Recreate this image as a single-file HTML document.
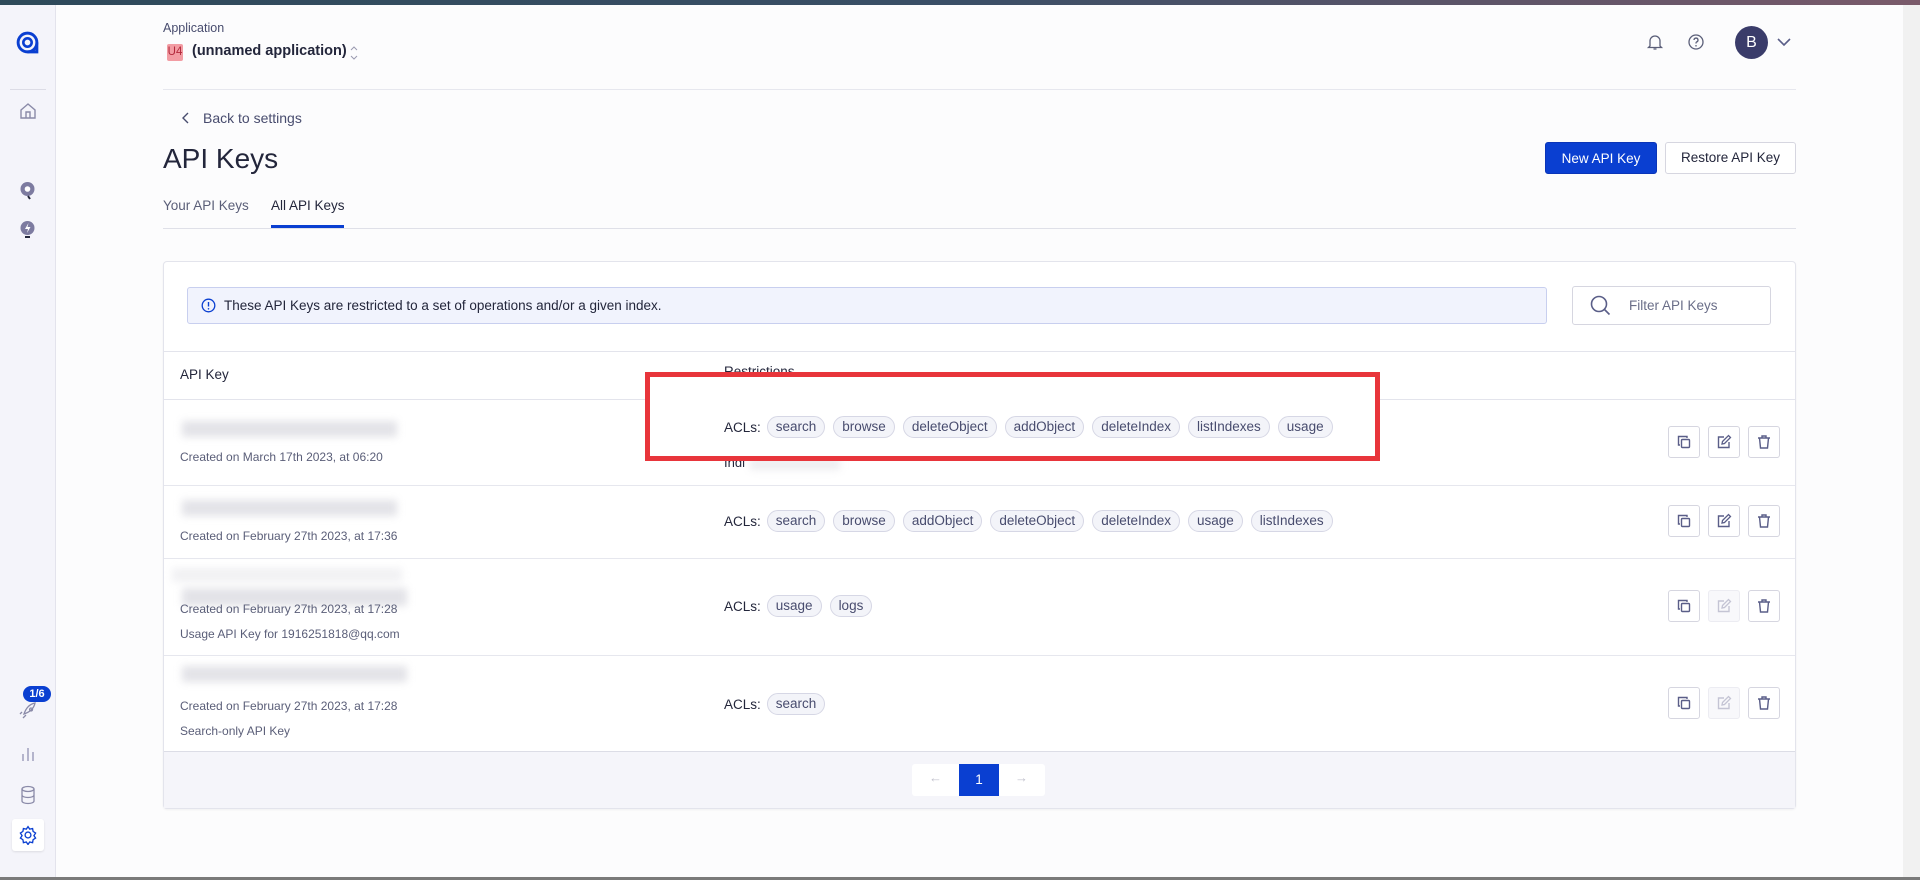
<!DOCTYPE html>
<html><head><meta charset="utf-8">
<style>
*{box-sizing:border-box;margin:0;padding:0}
body{width:1920px;height:880px;overflow:hidden;background:#fcfcfd;font-family:"Liberation Sans",sans-serif;color:#23263b;position:relative}
.abs{position:absolute}
.topbar{left:0;top:0;width:1920px;height:5px;background:linear-gradient(90deg,#2e4a5a,#3a4e66 50%,#7a5a6a)}
.side{left:0;top:5px;width:56px;height:873px;background:#f4f4fa;border-right:1px solid #e3e3ec}
.scroll{left:1903px;top:5px;width:17px;height:875px;background:#f1f1f1}
.bottom{left:0;top:877px;width:1920px;height:3px;background:#7a7a7a}
.hline{height:1px;background:#e6e7ee}
.chip{display:inline-block;height:22px;line-height:20px;padding:0 8px;border:1px solid #d6d7e5;background:#f3f4f9;border-radius:11px;font-size:13.5px;color:#484c6e;margin-right:8px;vertical-align:middle}
.acl{font-size:13.5px;color:#23263b;margin-right:6px;vertical-align:middle}
.small{font-size:12px;color:#5a5e78}
.blur{background:#dcdce2;filter:blur(4px);opacity:.8}
.ab{width:32px;height:32px;border:1px solid #d6d6e0;border-radius:3px;background:#fff;display:flex;align-items:center;justify-content:center}
.ab.dis{border-color:#ececf2;background:#f8f8fb}
</style></head><body>
<div class="abs topbar"></div>
<div class="abs side"></div>
<div class="abs scroll"></div>
<div class="abs bottom"></div>

<svg class="abs" style="left:15px;top:30px" width="25" height="25" viewBox="0 0 24 24"><circle cx="12" cy="12" r="9" fill="none" stroke="#0a3fd1" stroke-width="2.8"/><circle cx="12" cy="12" r="4" fill="none" stroke="#0a3fd1" stroke-width="2.5"/><path d="M12 21H21V12" fill="none" stroke="#0a3fd1" stroke-width="2.8"/></svg>
<div class="abs" style="left:10px;top:89px;width:36px;height:1px;background:#dcdce6"></div>
<svg class="abs" style="left:19px;top:102px" width="18" height="18" viewBox="0 0 18 18"><path d="M2 8L9 2l7 6v8H2z M7 16v-6h4v6" fill="none" stroke="#8a8aa8" stroke-width="1.4"/></svg>
<svg class="abs" style="left:19px;top:181px" width="17" height="20" viewBox="0 0 17 20"><circle cx="8.5" cy="8" r="7" fill="#7d7ba0"/><circle cx="8.5" cy="8" r="2.8" fill="#fff"/><path d="M9 15l2 3" stroke="#23263b" stroke-width="2"/></svg>
<svg class="abs" style="left:19px;top:220px" width="17" height="20" viewBox="0 0 17 20"><circle cx="8.5" cy="8" r="7" fill="#7d7ba0"/><path d="M9.5 3L6 9h3l-1 4 3.5-6h-3z" fill="#fff"/><path d="M6 17h5" stroke="#23263b" stroke-width="2"/></svg>
<div class="abs" style="left:23px;top:686px;width:28px;height:16px;background:#0a3fd1;color:#fff;font-size:11px;font-weight:bold;border-radius:8px;text-align:center;line-height:16px">1/6</div>
<svg class="abs" style="left:18px;top:700px" width="20" height="20" viewBox="0 0 20 20"><path d="M6 14c2-6 6-10 11-11-1 5-5 9-11 11z M8 15l-3 3 M4 12l-2 2 M13 8a1.5 1.5 0 1 0 .1 0" fill="none" stroke="#8a8aa8" stroke-width="1.3"/></svg>
<svg class="abs" style="left:19px;top:745px" width="18" height="18" viewBox="0 0 18 18"><path d="M4 16V9 M9 16V3 M14 16V7" stroke="#9a9ab8" stroke-width="1.4"/></svg>
<svg class="abs" style="left:19px;top:785px" width="18" height="20" viewBox="0 0 18 20"><ellipse cx="9" cy="4" rx="6" ry="2.5" fill="none" stroke="#8a8aa8" stroke-width="1.3"/><path d="M3 4v12c0 1.5 2.7 2.5 6 2.5s6-1 6-2.5V4 M3 10c0 1.5 2.7 2.5 6 2.5s6-1 6-2.5" fill="none" stroke="#8a8aa8" stroke-width="1.3"/></svg>
<div class="abs" style="left:12px;top:819px;width:32px;height:32px;background:#fff;border-radius:3px;box-shadow:0 1px 2px rgba(0,0,0,.1)"></div>
<svg class="abs" style="left:18px;top:825px" width="20" height="20" viewBox="0 0 24 24"><path d="M12 2l2 3 3.5-.8.6 3.5 3 2-2 3 2 3-3 2-.6 3.5-3.5-.8-2 3-2-3-3.5.8-.6-3.5-3-2 2-3-2-3 3-2 .6-3.5L10 5z" fill="none" stroke="#0a3fd1" stroke-width="1.6"/><circle cx="12" cy="12" r="3.5" fill="none" stroke="#0a3fd1" stroke-width="1.6"/></svg>

<div class="abs" style="left:163px;top:21px;font-size:12.5px;color:#484c6e">Application</div>
<div class="abs" style="left:167px;top:44px;width:16px;height:17px;background:#f29ca3;color:#b2283b;font-size:11.5px;line-height:17px;text-align:center;border-radius:2px">U4</div>
<div class="abs" style="left:192px;top:43px;font-size:14.5px;font-weight:bold;color:#23263b">(unnamed application)</div>
<svg class="abs" style="left:350px;top:44px" width="8" height="18" viewBox="0 0 8 18"><path d="M1 6l3-3 3 3 M1 12l3 3 3-3" fill="none" stroke="#9a9ab0" stroke-width="1"/></svg>
<div class="abs hline" style="left:163px;top:89px;width:1633px"></div>
<svg class="abs" style="left:1646px;top:33px" width="18" height="18" viewBox="0 0 18 18"><path d="M4 13V8a5 5 0 0 1 10 0v5l1.5 1.5h-13z M7.5 16h3" fill="none" stroke="#5a5e78" stroke-width="1.3"/></svg>
<svg class="abs" style="left:1687px;top:33px" width="18" height="18" viewBox="0 0 18 18"><circle cx="9" cy="9" r="7" fill="none" stroke="#5a5e78" stroke-width="1.3"/><path d="M7 7a2 2 0 1 1 2.5 2c-.5.2-.5.8-.5 1.5" fill="none" stroke="#5a5e78" stroke-width="1.3"/><circle cx="9" cy="12.8" r=".8" fill="#5a5e78"/></svg>
<div class="abs" style="left:1735px;top:26px;width:33px;height:33px;border-radius:50%;background:#3a3c6a;color:#fff;font-size:16px;text-align:center;line-height:33px">B</div>
<svg class="abs" style="left:1776px;top:36px" width="16" height="12" viewBox="0 0 16 12"><path d="M2 3l6 6 6-6" fill="none" stroke="#5a5e88" stroke-width="1.6"/></svg>

<svg class="abs" style="left:181px;top:111px" width="10" height="14" viewBox="0 0 10 14"><path d="M7 2L2 7l5 5" fill="none" stroke="#484c6e" stroke-width="1.4"/></svg>
<div class="abs" style="left:203px;top:110px;font-size:14px;color:#484c6e">Back to settings</div>
<div class="abs" style="left:163px;top:143px;font-size:28px;color:#23263b">API Keys</div>
<div class="abs" style="left:1545px;top:142px;width:112px;height:32px;background:#0a3fd1;border-radius:3px;color:#fff;font-size:13.5px;text-align:center;line-height:32px;border:1px solid #0a35b8">New API Key</div>
<div class="abs" style="left:1665px;top:142px;width:131px;height:32px;background:#fff;border:1px solid #d6d6e0;border-radius:3px;color:#23263b;font-size:13.5px;text-align:center;line-height:30px">Restore API Key</div>
<div class="abs" style="left:163px;top:198px;font-size:13.5px;color:#5a5e78">Your API Keys</div>
<div class="abs" style="left:271px;top:198px;font-size:13.5px;color:#23263b">All API Keys</div>
<div class="abs" style="left:271px;top:225px;width:73px;height:3px;background:#0a3fd1"></div>
<div class="abs hline" style="left:163px;top:228px;width:1633px;background:#dfe0e8"></div>

<div class="abs" style="left:163px;top:261px;width:1633px;height:548px;background:#fff;border:1px solid #e3e4ec;border-radius:4px;box-shadow:0 1px 2px rgba(0,0,0,.05)"></div>
<div class="abs" style="left:187px;top:287px;width:1360px;height:37px;background:#f1f3fd;border:1px solid #c8cfef;border-radius:3px"></div>
<svg class="abs" style="left:201px;top:298px" width="15" height="15" viewBox="0 0 15 15"><circle cx="7.5" cy="7.5" r="6.3" fill="none" stroke="#0a3fd1" stroke-width="1.3"/><path d="M7.5 4v4.5" stroke="#0a3fd1" stroke-width="1.4"/><circle cx="7.5" cy="10.8" r=".8" fill="#0a3fd1"/></svg>
<div class="abs" style="left:224px;top:298px;font-size:13.5px;color:#23263b">These API Keys are restricted to a set of operations and/or a given index.</div>
<div class="abs" style="left:1572px;top:286px;width:199px;height:39px;background:#fff;border:1px solid #d6d6e0;border-radius:3px"></div>
<svg class="abs" style="left:1589px;top:294px" width="24" height="24" viewBox="0 0 24 24"><circle cx="10" cy="10" r="7.5" fill="none" stroke="#5a5e88" stroke-width="1.6"/><path d="M15.5 15.5l5 5" stroke="#5a5e88" stroke-width="1.6"/></svg>
<div class="abs" style="left:1629px;top:298px;font-size:13.5px;color:#6a6e88">Filter API Keys</div>

<div class="abs hline" style="left:164px;top:351px;width:1631px;background:#e3e4ec"></div>
<div class="abs" style="left:180px;top:367px;font-size:13.5px;color:#23263b">API Key</div>
<div class="abs" style="left:724px;top:364px;font-size:13.5px;color:#23263b">Restrictions</div>
<div class="abs hline" style="left:164px;top:399px;width:1631px;background:#e3e4ec"></div>

<div class="abs blur" style="left:182px;top:421px;width:215px;height:16px"></div>
<div class="abs small" style="left:180px;top:450px">Created on March 17th 2023, at 06:20</div>
<div class="abs" style="left:724px;top:455px;font-size:13px;color:#23263b">Indi</div>
<div class="abs blur" style="left:750px;top:458px;width:90px;height:12px;opacity:.5"></div>
<div class="abs hline" style="left:164px;top:485px;width:1631px"></div>

<div class="abs blur" style="left:182px;top:500px;width:215px;height:16px"></div>
<div class="abs small" style="left:180px;top:529px">Created on February 27th 2023, at 17:36</div>
<div class="abs" style="left:724px;top:510px;white-space:nowrap"><span class="acl">ACLs:</span><span class="chip">search</span><span class="chip">browse</span><span class="chip">addObject</span><span class="chip">deleteObject</span><span class="chip">deleteIndex</span><span class="chip">usage</span><span class="chip">listIndexes</span></div>
<div class="abs hline" style="left:164px;top:558px;width:1631px"></div>

<div class="abs blur" style="left:172px;top:568px;width:230px;height:14px;opacity:.4"></div>
<div class="abs blur" style="left:182px;top:588px;width:225px;height:18px"></div>
<div class="abs small" style="left:180px;top:602px">Created on February 27th 2023, at 17:28</div>
<div class="abs small" style="left:180px;top:627px">Usage API Key for 1916251818@qq.com</div>
<div class="abs" style="left:724px;top:595px;white-space:nowrap"><span class="acl">ACLs:</span><span class="chip">usage</span><span class="chip">logs</span></div>
<div class="abs hline" style="left:164px;top:655px;width:1631px"></div>

<div class="abs blur" style="left:182px;top:666px;width:225px;height:16px"></div>
<div class="abs small" style="left:180px;top:699px">Created on February 27th 2023, at 17:28</div>
<div class="abs small" style="left:180px;top:724px">Search-only API Key</div>
<div class="abs" style="left:724px;top:693px;white-space:nowrap"><span class="acl">ACLs:</span><span class="chip">search</span></div>

<div class="abs" style="left:164px;top:751px;width:1631px;height:57px;background:#f5f5fa;border-top:1px solid #dcdde6"></div>
<div class="abs" style="left:912px;top:764px;width:133px;height:32px;background:#fff;border-radius:3px"></div>
<div class="abs" style="left:929px;top:770px;font-size:13px;color:#c0c0cc">←</div>
<div class="abs" style="left:959px;top:764px;width:40px;height:32px;background:#0a3fd1;color:#fff;font-size:13.5px;text-align:center;line-height:32px">1</div>
<div class="abs" style="left:1015px;top:770px;font-size:13px;color:#c0c0cc">→</div>

<div class="abs" style="left:1668px;top:426px;display:flex;gap:8px">
<div class="ab"><svg width="16" height="16" viewBox="0 0 16 16"><path d="M4 11H2.5V2.5H11V4" fill="none" stroke="#5a5e88" stroke-width="1.4"/><rect x="5.5" y="5.5" width="8" height="8" rx="1" fill="none" stroke="#5a5e88" stroke-width="1.4"/></svg></div>
<div class="ab"><svg width="16" height="16" viewBox="0 0 16 16"><path d="M8 3H2.5v10.5H13V8" fill="none" stroke="#5a5e88" stroke-width="1.4"/><path d="M6 10l.5-2.5 6-6 2 2-6 6z" fill="none" stroke="#5a5e88" stroke-width="1.3"/></svg></div>
<div class="ab"><svg width="16" height="16" viewBox="0 0 16 16"><path d="M2 4h12 M6 4V2h4v2 M3.5 4l1 10h7l1-10" fill="none" stroke="#5a5e88" stroke-width="1.4"/></svg></div>
</div>
<div class="abs" style="left:1668px;top:505px;display:flex;gap:8px">
<div class="ab"><svg width="16" height="16" viewBox="0 0 16 16"><path d="M4 11H2.5V2.5H11V4" fill="none" stroke="#5a5e88" stroke-width="1.4"/><rect x="5.5" y="5.5" width="8" height="8" rx="1" fill="none" stroke="#5a5e88" stroke-width="1.4"/></svg></div>
<div class="ab"><svg width="16" height="16" viewBox="0 0 16 16"><path d="M8 3H2.5v10.5H13V8" fill="none" stroke="#5a5e88" stroke-width="1.4"/><path d="M6 10l.5-2.5 6-6 2 2-6 6z" fill="none" stroke="#5a5e88" stroke-width="1.3"/></svg></div>
<div class="ab"><svg width="16" height="16" viewBox="0 0 16 16"><path d="M2 4h12 M6 4V2h4v2 M3.5 4l1 10h7l1-10" fill="none" stroke="#5a5e88" stroke-width="1.4"/></svg></div>
</div>
<div class="abs" style="left:1668px;top:590px;display:flex;gap:8px">
<div class="ab"><svg width="16" height="16" viewBox="0 0 16 16"><path d="M4 11H2.5V2.5H11V4" fill="none" stroke="#5a5e88" stroke-width="1.4"/><rect x="5.5" y="5.5" width="8" height="8" rx="1" fill="none" stroke="#5a5e88" stroke-width="1.4"/></svg></div>
<div class="ab dis"><svg width="16" height="16" viewBox="0 0 16 16"><path d="M8 3H2.5v10.5H13V8" fill="none" stroke="#c4c4d4" stroke-width="1.4"/><path d="M6 10l.5-2.5 6-6 2 2-6 6z" fill="none" stroke="#c4c4d4" stroke-width="1.3"/></svg></div>
<div class="ab"><svg width="16" height="16" viewBox="0 0 16 16"><path d="M2 4h12 M6 4V2h4v2 M3.5 4l1 10h7l1-10" fill="none" stroke="#5a5e88" stroke-width="1.4"/></svg></div>
</div>
<div class="abs" style="left:1668px;top:687px;display:flex;gap:8px">
<div class="ab"><svg width="16" height="16" viewBox="0 0 16 16"><path d="M4 11H2.5V2.5H11V4" fill="none" stroke="#5a5e88" stroke-width="1.4"/><rect x="5.5" y="5.5" width="8" height="8" rx="1" fill="none" stroke="#5a5e88" stroke-width="1.4"/></svg></div>
<div class="ab dis"><svg width="16" height="16" viewBox="0 0 16 16"><path d="M8 3H2.5v10.5H13V8" fill="none" stroke="#c4c4d4" stroke-width="1.4"/><path d="M6 10l.5-2.5 6-6 2 2-6 6z" fill="none" stroke="#c4c4d4" stroke-width="1.3"/></svg></div>
<div class="ab"><svg width="16" height="16" viewBox="0 0 16 16"><path d="M2 4h12 M6 4V2h4v2 M3.5 4l1 10h7l1-10" fill="none" stroke="#5a5e88" stroke-width="1.4"/></svg></div>
</div>

<div class="abs" style="left:645px;top:372px;width:735px;height:89px;border:5px solid #e8353b;background:#fff"></div>
<div class="abs" style="left:724px;top:416px;white-space:nowrap"><span class="acl">ACLs:</span><span class="chip">search</span><span class="chip">browse</span><span class="chip">deleteObject</span><span class="chip">addObject</span><span class="chip">deleteIndex</span><span class="chip">listIndexes</span><span class="chip">usage</span></div>
</body></html>
